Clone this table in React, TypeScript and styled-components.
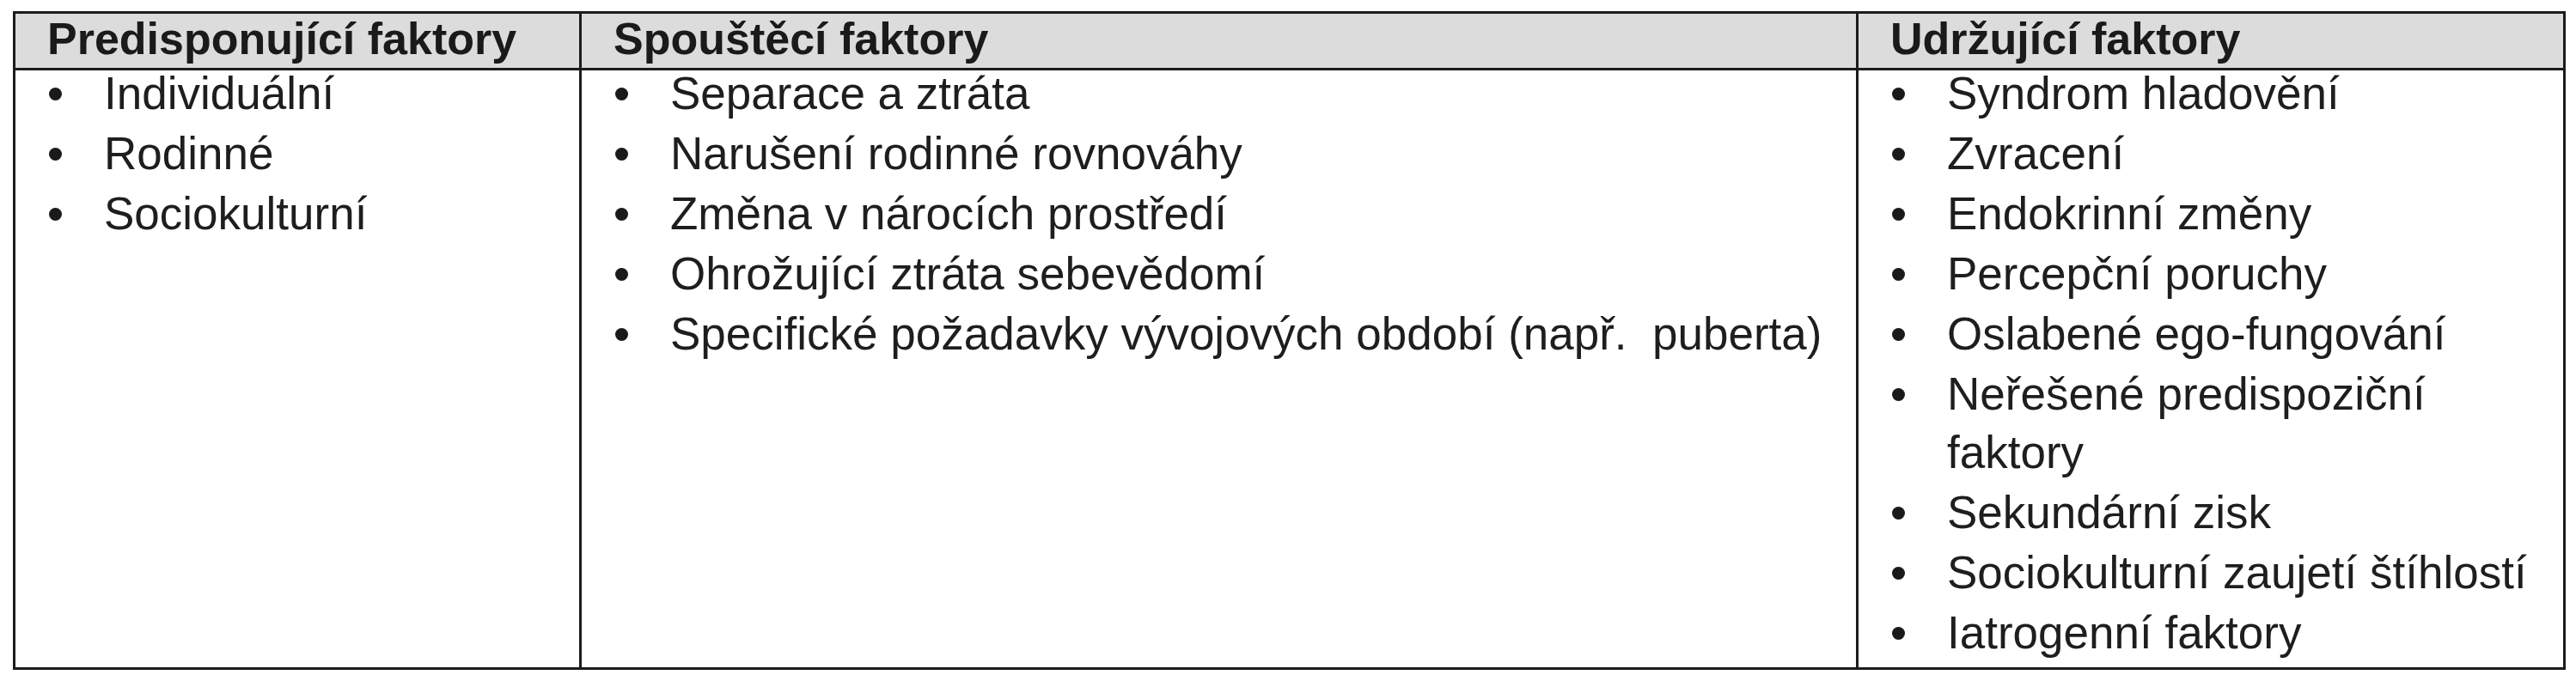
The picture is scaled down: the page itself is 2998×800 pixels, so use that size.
import React from "react";
import styled, { createGlobalStyle } from "styled-components";

const GlobalStyle = createGlobalStyle`
  html, body {
    margin: 0;
    padding: 0;
    background: #ffffff;
  }
  body {
    font-family: "Liberation Sans", Arial, sans-serif;
    color: #1e1e1e;
  }
`;

const Page = styled.div`
  padding: 13px 0 0 15px;
`;

const Table = styled.div`
  width: 2971px;
  box-sizing: border-box;
  border: 3px solid #1c1c1c;
  display: grid;
  grid-template-columns: 656px 1486px 1fr;
  grid-template-rows: 66px 695px;
`;

const HeadCell = styled.div<{ $first?: boolean }>`
  box-sizing: border-box;
  background: #dcdcdc;
  border-bottom: 3px solid #1c1c1c;
  border-left: ${(p) => (p.$first ? "none" : "3px solid #1c1c1c")};
  padding: 0 0 5px 37px;
  font-family: "Liberation Sans", Arial, sans-serif;
  font-weight: 700;
  font-size: 52px;
  line-height: 58px;
  color: #1a1a1a;
  white-space: nowrap;
`;

const BodyCell = styled.div<{ $first?: boolean }>`
  border-left: ${(p) => (p.$first ? "none" : "3px solid #1c1c1c")};
`;

const List = styled.ul`
  list-style: none;
  margin: -7px 0 0 0;
  padding: 0;
  display: flex;
  flex-direction: column;
  gap: 2px;
`;

const Item = styled.li`
  display: grid;
  grid-template-columns: 103px 1fr;
  font-family: "Liberation Sans", Arial, sans-serif;
  font-size: 53px;
  line-height: 68px;
  color: #1e1e1e;
`;

const BulletSlot = styled.span`
  height: 68px;
  display: flex;
  align-items: center;
  padding-left: 39px;
`;

const Dot = styled.span`
  width: 15px;
  height: 15px;
  border-radius: 50%;
  background: #1a1a1a;
  margin-top: 1px;
`;

const Text = styled.span``;

const columns: { title: string; items: string[] }[] = [
  {
    title: "Predisponující faktory",
    items: ["Individuální", "Rodinné", "Sociokulturní"],
  },
  {
    title: "Spouštěcí faktory",
    items: [
      "Separace a ztráta",
      "Narušení rodinné rovnováhy",
      "Změna v nárocích prostředí",
      "Ohrožující ztráta sebevědomí",
      "Specifické požadavky vývojových období (např.\u00a0 puberta)",
    ],
  },
  {
    title: "Udržující faktory",
    items: [
      "Syndrom hladovění",
      "Zvracení",
      "Endokrinní změny",
      "Percepční poruchy",
      "Oslabené ego-fungování",
      "Neřešené predispoziční faktory",
      "Sekundární zisk",
      "Sociokulturní zaujetí štíhlostí",
      "Iatrogenní faktory",
    ],
  },
];

export default function App() {
  return (
    <>
      <GlobalStyle />
      <Page>
        <Table>
          {columns.map((c, i) => (
            <HeadCell key={c.title} $first={i === 0}>
              {c.title}
            </HeadCell>
          ))}
          {columns.map((c, i) => (
            <BodyCell key={c.title} $first={i === 0}>
              <List>
                {c.items.map((it) => (
                  <Item key={it}>
                    <BulletSlot>
                      <Dot />
                    </BulletSlot>
                    <Text>{it}</Text>
                  </Item>
                ))}
              </List>
            </BodyCell>
          ))}
        </Table>
      </Page>
    </>
  );
}
